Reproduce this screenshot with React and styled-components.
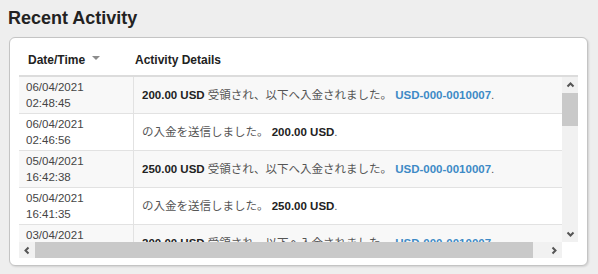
import React from 'react';
import styled, {createGlobalStyle} from 'styled-components';

const GlobalStyle = createGlobalStyle`
  html, body {
    margin: 0;
    background: #eeeeee;
  }
  body {
    font-family: "Liberation Sans", Arial, "Noto Sans CJK JP", sans-serif;
    color: #333;
  }
`;

const Page = styled.div`
  width: 598px;
  height: 274px;
  box-sizing: border-box;
  padding: 7px 0 0 9px;
`;

const Title = styled.h2`
  margin: 0 0 8px -1px;
  font-size: 18px;
  line-height: 22px;
  font-weight: bold;
  color: #222;
`;

const Panel = styled.div`
  width: 579px;
  box-sizing: border-box;
  background: #fff;
  border: 1px solid #c4c4c4;
  border-radius: 6px;
  box-shadow: 1px 1px 2px rgba(0, 0, 0, 0.12);
  padding: 0 9px 7px 9px;
`;

const HeaderRow = styled.div`
  display: flex;
  align-items: flex-end;
  height: 37px;
  padding-bottom: 7px;
  box-sizing: border-box;
  font-size: 12px;
  line-height: 16px;
  font-weight: bold;
  color: #222;
`;

const HeaderCell = styled.div`
  display: flex;
  align-items: center;
  gap: 7px;
  width: ${p => p.width ? p.width + 'px' : 'auto'};
  padding-left: ${p => p.pad}px;
  box-sizing: border-box;
`;

const Caret = styled.span`
  width: 0;
  height: 0;
  border-left: 4px solid transparent;
  border-right: 4px solid transparent;
  border-top: 4px solid #8c8c8c;
  margin-top: -5px;
`;

const ScrollArea = styled.div`
  display: grid;
  grid-template-columns: 543px 16px;
  grid-template-rows: 165px 16px;
  border-top: 2px solid #dcdcdc;
`;

const Viewport = styled.div`
  overflow: hidden;
`;

const Row = styled.div`
  display: flex;
  height: 37px;
  box-sizing: border-box;
  border-bottom: 1px solid #e2e2e2;
  background: ${p => p.alt ? '#f8f8f8' : '#fff'};
  font-size: 11.5px;
  line-height: 16px;
`;

const DateCell = styled.div`
  width: 115px;
  flex-shrink: 0;
  box-sizing: border-box;
  border-right: 1px solid #e2e2e2;
  padding: 2px 0 0 7px;
  color: #444;
`;

const DetailCell = styled.div`
  flex: 1;
  display: flex;
  align-items: center;
  padding-left: 8px;
  white-space: nowrap;
  color: #555;
`;

const Amount = styled.b`
  color: #222;
`;

const Account = styled.b`
  color: #3d8ac6;
`;

const VTrack = styled.div`
  display: flex;
  flex-direction: column;
  background: #f1f1f1;
`;

const HTrack = styled.div`
  display: flex;
  background: #f1f1f1;
`;

const ArrowBtn = styled.div`
  width: 16px;
  height: 16px;
  flex-shrink: 0;
  display: flex;
  align-items: center;
  justify-content: center;
`;

const Thumb = styled.div`
  background: #c9c9c9;
  flex-shrink: 0;
  width: ${p => p.horizontal ? p.size + 'px' : '100%'};
  height: ${p => p.horizontal ? '100%' : p.size + 'px'};
`;

const Spacer = styled.div`
  flex: 1;
`;

const Corner = styled.div`
  background: #fff;
`;

const arrows = {
  up: '1.5,5.5 4.5,2.5 7.5,5.5',
  down: '1.5,2.5 4.5,5.5 7.5,2.5',
  left: '5.5,1.5 2.5,4.5 5.5,7.5',
  right: '2.5,1.5 5.5,4.5 2.5,7.5',
};

function Arrow({dir}) {
  return (
    <ArrowBtn>
      <svg width="9" height="9" viewBox="0 0 9 9">
        <polyline points={arrows[dir]} fill="none" stroke="#555" strokeWidth="2" />
      </svg>
    </ArrowBtn>
  );
}

const activity = [
  {date: '06/04/2021', time: '02:48:45', type: 'in', amount: '200.00 USD'},
  {date: '06/04/2021', time: '02:46:56', type: 'out', amount: '200.00 USD'},
  {date: '05/04/2021', time: '16:42:38', type: 'in', amount: '250.00 USD'},
  {date: '05/04/2021', time: '16:41:35', type: 'out', amount: '250.00 USD'},
  {date: '03/04/2021', time: '11:20:14', type: 'in', amount: '200.00 USD'},
];

function Details({item}) {
  if (item.type === 'in') {
    return (
      <DetailCell>
        <Amount>{item.amount}</Amount>&nbsp;受領され、以下へ入金されました。&nbsp;<Account>USD-000-0010007</Account>.
      </DetailCell>
    );
  }
  return (
    <DetailCell>
      の入金を送信しました。&nbsp;<Amount>{item.amount}</Amount>.
    </DetailCell>
  );
}

export default function App() {
  return (
    <>
      <GlobalStyle />
      <Page>
        <Title>Recent Activity</Title>
        <Panel>
          <HeaderRow>
            <HeaderCell width={115} pad={9}>Date/Time <Caret /></HeaderCell>
            <HeaderCell pad={1}>Activity Details</HeaderCell>
          </HeaderRow>
          <ScrollArea>
            <Viewport>
              {activity.map((item, i) => (
                <Row key={i} alt={i % 2 === 0}>
                  <DateCell>{item.date}<br />{item.time}</DateCell>
                  <Details item={item} />
                </Row>
              ))}
            </Viewport>
            <VTrack>
              <Arrow dir="up" />
              <Thumb size={33} />
              <Spacer />
              <Arrow dir="down" />
            </VTrack>
            <HTrack>
              <Arrow dir="left" />
              <Thumb horizontal size={498} />
              <Spacer />
              <Arrow dir="right" />
            </HTrack>
            <Corner />
          </ScrollArea>
        </Panel>
      </Page>
    </>
  );
}
